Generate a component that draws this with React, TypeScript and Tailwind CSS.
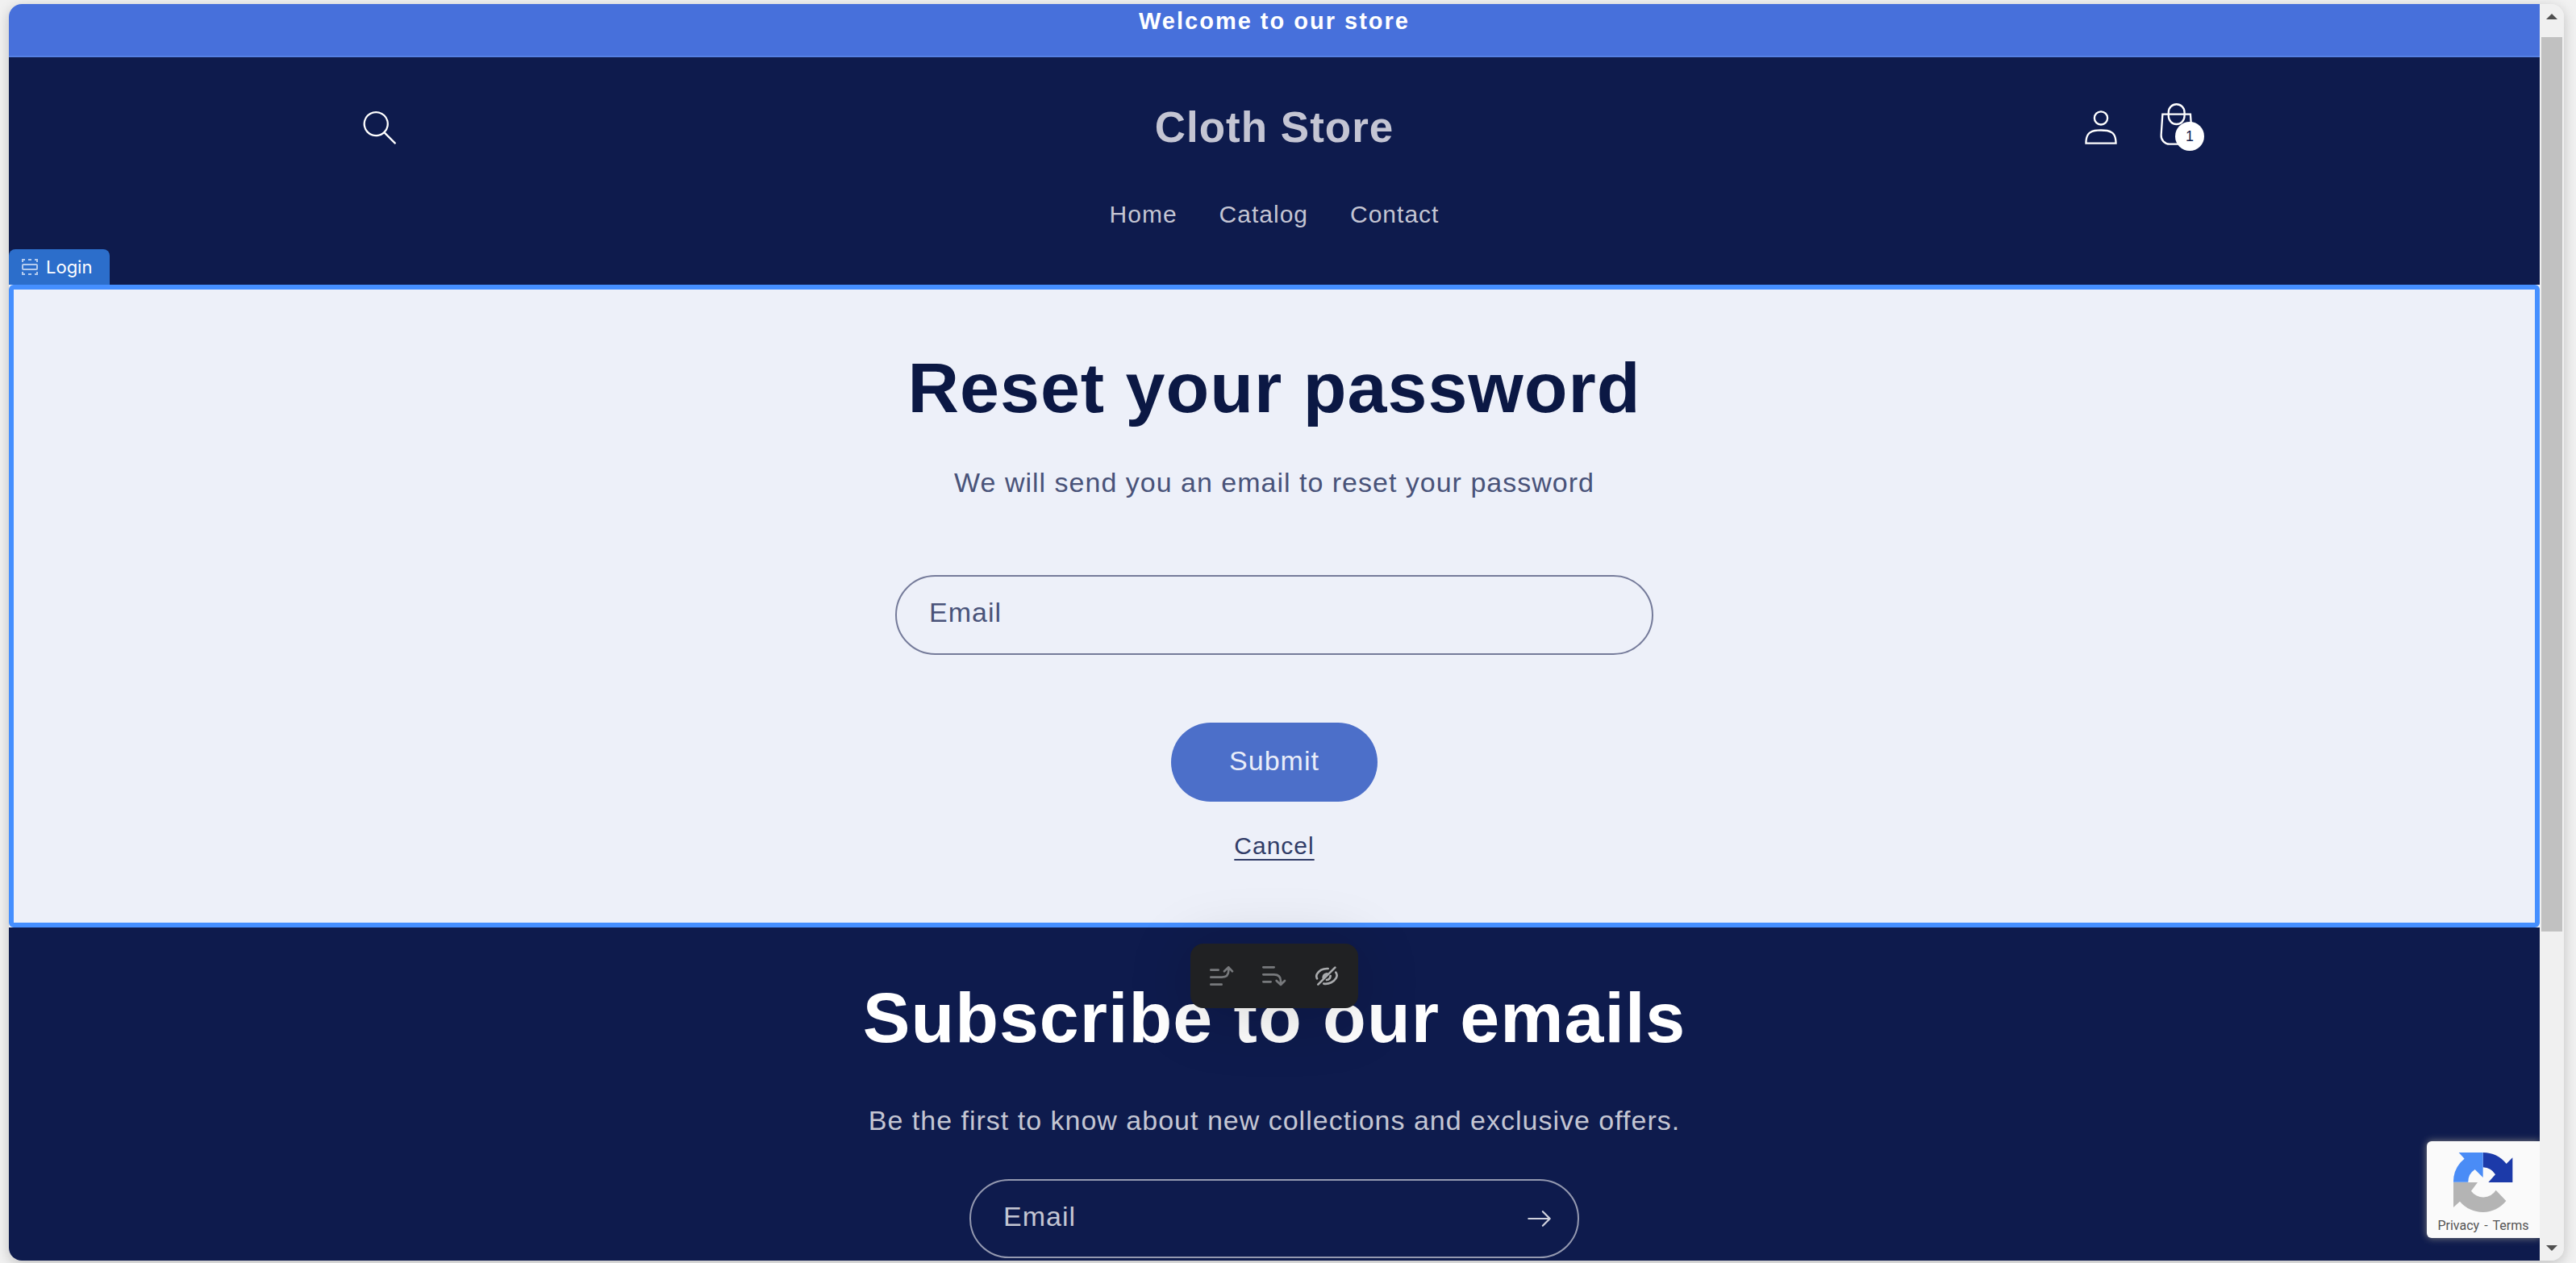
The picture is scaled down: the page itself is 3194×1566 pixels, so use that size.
import React from "react";

function SearchIcon() {
  return (
    <svg viewBox="0 0 18 19" className="h-11 w-11" fill="currentColor" aria-hidden="true">
      <path
        fillRule="evenodd"
        clipRule="evenodd"
        d="M11.03 11.68A5.784 5.784 0 112.85 3.5a5.784 5.784 0 018.18 8.18zm.26 1.12a6.78 6.78 0 11.72-.7l5.4 5.4a.5.5 0 11-.71.7l-5.41-5.4z"
      />
    </svg>
  );
}

function AccountIcon() {
  return (
    <svg viewBox="0 0 18 19" className="h-11 w-11" fill="currentColor" aria-hidden="true">
      <path
        fillRule="evenodd"
        clipRule="evenodd"
        d="M6 4.5a3 3 0 116 0 3 3 0 01-6 0zm3-4a4 4 0 100 8 4 4 0 000-8zm5.58 12.15c1.12.82 1.83 2.24 1.91 4.85H1.51c.08-2.6.79-4.03 1.9-4.85C4.66 11.75 6.5 11.5 9 11.5s4.35.26 5.58 1.15zM9 10.5c-2.5 0-4.65.24-6.17 1.35C1.27 12.98.5 14.93.5 18v.5h17V18c0-3.07-.77-5.02-2.33-6.15-1.52-1.1-3.67-1.35-6.17-1.35z"
      />
    </svg>
  );
}

function CartIcon() {
  return (
    <svg viewBox="0 0 40 40" className="h-[93px] w-[93px] shrink-0" fill="currentColor" aria-hidden="true">
      <path
        fillRule="evenodd"
        d="M20.5 6.5a4.75 4.75 0 00-4.75 4.75v.56h-3.16l-.77 11.6a5 5 0 004.99 5.34h7.38a5 5 0 004.99-5.33l-.78-11.61h-3.15v-.56a4.75 4.75 0 00-4.75-4.75zm3.75 5.31v-.56a3.75 3.75 0 10-7.5 0v.56h7.5zm-7.5 1h7.5v.56a3.75 3.75 0 11-7.5 0v-.56zm-1 0v.56a4.75 4.75 0 109.5 0v-.56h2.22l.71 10.67a4 4 0 01-3.99 4.27h-7.38a4 4 0 01-4-4.27l.72-10.67h2.22z"
      />
    </svg>
  );
}

function ArrowIcon() {
  return (
    <svg viewBox="0 0 14 10" className="h-[22px] w-[31px]" fill="currentColor" aria-hidden="true">
      <path
        fillRule="evenodd"
        clipRule="evenodd"
        d="M8.537.808a.5.5 0 01.817-.162l4 4a.5.5 0 010 .708l-4 4a.5.5 0 11-.708-.708L11.793 5.5H1a.5.5 0 010-1h10.793L8.646 1.354a.5.5 0 01-.109-.546z"
      />
    </svg>
  );
}

function SectionIcon() {
  return (
    <svg viewBox="0 0 20 20" className="h-5 w-5" fill="none" stroke="#b4cbee" strokeWidth="2" aria-hidden="true">
      <path d="M1 4V1h3M8 1h4M16 1h3v3M1 16v3h3M8 19h4M16 19h3v-3" />
      <rect x="1" y="7" width="18" height="6" rx="1" />
    </svg>
  );
}

function MoveUpIcon() {
  return (
    <svg viewBox="180 175 90 78" className="h-[26px] w-[30px]" fill="none" stroke="#77797c" strokeWidth="8" strokeLinecap="round" strokeLinejoin="round" aria-hidden="true">
      <path d="M184 192h28M184 219h41c16 0 25-9 25-25v-12M234 197l16-15 14 15M184 246h40" />
    </svg>
  );
}

function MoveDownIcon() {
  return (
    <svg viewBox="372 175 90 78" className="h-[26px] w-[30px]" fill="none" stroke="#77797c" strokeWidth="8" strokeLinecap="round" strokeLinejoin="round" aria-hidden="true">
      <path d="M376 182h40M376 209h40c16 0 25 9 25 25v13M425 232l16 15 15-15M376 236h28" />
    </svg>
  );
}

function HideIcon() {
  return (
    <svg viewBox="567 170 90 78" className="h-[26px] w-[30px]" fill="none" stroke="#a9abad" strokeWidth="8" strokeLinecap="round" strokeLinejoin="round" aria-hidden="true">
      <path d="M580 241l63-63M576 219c-3-6-3-12 0-17 8-14 22-21 41-20M646 196c5 7 5 14 1 21-8 14-26 24-46 21M599 217c0-9 5-15 14-16M626 209c-1 9-6 14-14 15" />
    </svg>
  );
}

function RecaptchaLogo() {
  return (
    <svg viewBox="187 112 222 228" className="h-[76px] w-[74px]" aria-hidden="true">
      <path fill="#1c3aa9" d="M297 115A111 111 0 0 1 384 157L407 134V226H317L343 197A55 55 0 0 0 297 170Z" />
      <path fill="#4a8cf6" d="M207 115H297V208L267 178A55 55 0 0 0 242 225H187A111 111 0 0 1 228 138Z" />
      <path fill="#b4b4b4" d="M187 226H277L253 258A55 55 0 0 0 345 255L383 295A111 111 0 0 1 211 297L187 319Z" />
    </svg>
  );
}

const navLinks = ["Home", "Catalog", "Contact"];

function Header() {
  return (
    <header className="bg-[#0e1b4d] pt-[38px] pb-[57px] text-[#c4c5d3]">
      <div className="mx-auto grid h-[92px] max-w-[2328px] grid-cols-[1fr_auto_1fr] items-center text-white">
        <button type="button" aria-label="Search" className="flex h-full w-[110px] items-center justify-center">
          <SearchIcon />
        </button>
        <a href="#" className="text-[53px] font-bold tracking-[1px] text-[#c4c5d3]">
          Cloth Store
        </a>
        <div className="flex h-full justify-end">
          <a href="#" aria-label="Account" className="flex w-[93px] items-center justify-center">
            <AccountIcon />
          </a>
          <a href="#" aria-label="Cart" className="relative flex w-[93px] items-center justify-center pt-1">
            <CartIcon />
            <span className="absolute top-[42px] left-[46px] flex h-9 w-9 items-center justify-center rounded-full bg-white text-lg text-[#0e1b4d]">
              1
            </span>
          </a>
        </div>
      </div>
      <nav className="mt-[35px] flex justify-center gap-[52px] text-[30px] leading-[60px] tracking-[1px]">
        {navLinks.map((label) => (
          <a key={label} href="#">
            {label}
          </a>
        ))}
      </nav>
    </header>
  );
}

function LoginSection() {
  return (
    <section className="relative rounded-md border-6 border-[#458fff] bg-[#edf0f9] pt-[74px] pb-[75px]">
      <div className="absolute -top-[50px] -left-1.5 flex h-11 items-center gap-2.5 rounded-t-lg bg-[#2c6ecb] pr-[22px] pl-4 font-['Inter'] text-[22px] text-white">
        <SectionIcon />
        Login
      </div>
      <form className="flex flex-col items-center" onSubmit={(e) => e.preventDefault()}>
        <h1 className="text-[88px] leading-[96px] font-bold tracking-[1px] text-[#0b1844]">Reset your password</h1>
        <p className="mt-[45px] text-[34px] leading-[48px] tracking-[1px] text-[#495379]">
          We will send you an email to reset your password
        </p>
        <input
          type="email"
          aria-label="Email"
          placeholder="Email"
          className="mt-[91px] h-[99px] w-full max-w-[940px] rounded-full border-2 border-[#757b9a] bg-transparent px-10 pb-1.5 text-[34px] tracking-[1px] text-[#495379] outline-none placeholder:text-[#495379]"
        />
        <button
          type="submit"
          className="mt-[84px] h-[98px] w-64 rounded-full bg-[#4c6fc9] pb-1 text-[34px] tracking-[1px] text-[#e9edf9]"
        >
          Submit
        </button>
        <a href="#" className="mt-[35px] text-[30px] leading-10 tracking-[1px] text-[#313c67] underline decoration-2 underline-offset-6">
          Cancel
        </a>
      </form>
    </section>
  );
}

function Newsletter() {
  return (
    <section className="flex flex-1 flex-col items-center bg-[#0e1b4d] pt-16">
      <h2 className="text-[88px] leading-[96px] font-bold tracking-[1px] text-white">Subscribe to our emails</h2>
      <p className="mt-[55px] text-[34px] leading-[48px] tracking-[1px] text-[#c4c6d3]">
        Be the first to know about new collections and exclusive offers.
      </p>
      <form
        className="mt-[49px] flex h-[98px] w-full max-w-[756px] shrink-0 items-center rounded-full border-2 border-[#9499b0]"
        onSubmit={(e) => e.preventDefault()}
      >
        <input
          type="email"
          aria-label="Email"
          placeholder="Email"
          className="h-full min-w-0 flex-1 bg-transparent pb-1.5 pl-10 text-[34px] tracking-[1px] text-[#c4c6d3] outline-none placeholder:text-[#c4c6d3]"
        />
        <button type="submit" aria-label="Subscribe" className="flex h-full w-24 items-center justify-center text-[#d0d2de]">
          <ArrowIcon />
        </button>
      </form>
    </section>
  );
}

function SectionToolbar() {
  return (
    <div className="absolute top-[1165px] left-1/2 flex h-20 w-52 -translate-x-1/2 items-center justify-between rounded-2xl bg-[#202123] px-6 shadow-[0_8px_80px_rgba(0,0,0,0.18)]">
      <button type="button" aria-label="Move up">
        <MoveUpIcon />
      </button>
      <button type="button" aria-label="Move down">
        <MoveDownIcon />
      </button>
      <button type="button" aria-label="Hide section">
        <HideIcon />
      </button>
    </div>
  );
}

function RecaptchaBadge() {
  return (
    <div className="absolute right-0 bottom-7 flex h-[120px] w-[140px] flex-col items-center rounded-l-md bg-[#fafafa] pt-[13px] font-['Roboto'] text-base text-[#555] shadow-[0_0_10px_gray]">
      <RecaptchaLogo />
      <div className="mt-1.5 flex gap-1.5 leading-5">
        <a href="#">Privacy</a>
        <span>-</span>
        <a href="#">Terms</a>
      </div>
    </div>
  );
}

function Scrollbar() {
  return (
    <div className="flex w-[30px] flex-col items-center justify-between bg-[#f0f0f0]" aria-hidden="true">
      <svg viewBox="0 0 14 7" className="mt-3 h-[7px] w-3.5" fill="#505050">
        <path d="M7 0l7 7H0z" />
      </svg>
      <div className="mt-[22px] flex w-[26px] flex-1 flex-col">
        <div className="h-[74%] bg-[#c1c1c1]" />
      </div>
      <svg viewBox="0 0 14 7" className="mb-3 h-[7px] w-3.5" fill="#505050">
        <path d="M7 7l7-7H0z" />
      </svg>
    </div>
  );
}

export default function App() {
  return (
    <div className="flex h-screen bg-[#f1f1f1] pt-[5px] pr-[15px] pb-[3px] pl-[11px] font-['Liberation_Sans',sans-serif]">
      <div className="flex flex-1 overflow-hidden rounded-2xl shadow-[0_4px_16px_rgba(0,0,0,0.2)]">
        <main className="relative flex flex-1 flex-col overflow-hidden bg-[#edf0f9]">
          <div className="border-b-2 border-[#5580e4] bg-[#4770db] pb-[22px] text-center text-[29px] leading-[42px] font-bold tracking-[2px] text-white">
            Welcome to our store
          </div>
          <Header />
          <LoginSection />
          <Newsletter />
          <SectionToolbar />
          <RecaptchaBadge />
        </main>
        <Scrollbar />
      </div>
    </div>
  );
}
